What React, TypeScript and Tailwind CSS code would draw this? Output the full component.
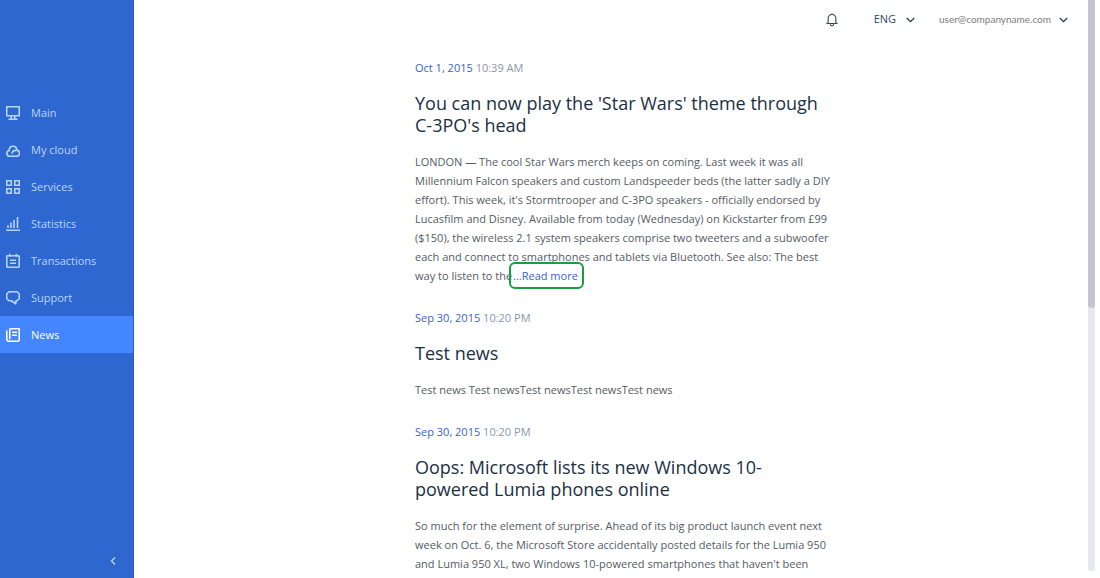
import React from "react";

type IconProps = { children: React.ReactNode };

function NavIcon({ children }: IconProps) {
  return (
    <svg
      width="14"
      height="17"
      viewBox="0 -1 14 17"
      fill="none"
      stroke="currentColor"
      strokeWidth="1.6"
      className="shrink-0"
      aria-hidden="true"
    >
      {children}
    </svg>
  );
}

const items = [
  {
    label: "Main",
    icon: (
      <>
        <path d="M.75 1.75h12.5v9H.75zM2.5 14.25h9" />
        <path d="M5.25 11v3M8.75 11v3" />
      </>
    ),
  },
  {
    label: "My cloud",
    icon: (
      <>
        <path d="M3.7 14.25A2.9 2.9 0 0 1 3.2 8.5C3.2 5.7 4.8 4.2 7 4.2s3.8 1.5 3.9 4.2a2.9 2.9 0 0 1-.6 5.85z" />
        <path d="M6 11.6C6.2 9.4 7.6 8.4 10 8.4" />
      </>
    ),
  },
  {
    label: "Services",
    icon: <path d="M.75 1.75h4.5v4.5H.75zM8.75 1.75h4.5v4.5h-4.5zM.75 9.75h4.5v4.5H.75zM8.75 9.75h4.5v4.5h-4.5z" />,
  },
  {
    label: "Statistics",
    icon: <path d="M0 14.25h14M2 12V9.2M5 12V6.5M8 12V4M11.5 12V1" />,
  },
  {
    label: "Transactions",
    icon: (
      <>
        <rect x=".75" y="2.75" width="12.5" height="11.5" rx="1" />
        <path d="M3.75 .8v3M10.25 .8v3M4 7.25h6M4 10.25h6" />
      </>
    ),
  },
  {
    label: "Support",
    icon: <path d="M3 1.75h8l2.25 2v5l-2.25 2H10l-.3 3.2-4.2-3.2H3l-2.25-2v-5z" strokeLinejoin="round" />,
  },
  {
    label: "News",
    icon: (
      <>
        <path d="M3.75 1.75h9.5v11.2l-1 1.3H2.2L.75 12.8V3.5" />
        <path d="M3.75 1.75v10.5M6 5.25h5M6 8.25h5" />
      </>
    ),
  },
];

function Chevron() {
  return (
    <svg width="9" height="6" viewBox="0 0 9 6" fill="none" stroke="#1f3447" strokeWidth="1.2" aria-hidden="true">
      <path d="M.8 1 4.5 4.7 8.2 1" />
    </svg>
  );
}

type ArticleProps = { date: string; time: string; title: string; children: React.ReactNode };

function Article({ date, time, title, children }: ArticleProps) {
  return (
    <article>
      <p className="text-[11px] leading-4 text-[#8d95a8]">
        <span className="text-[#3863cc]">{date}</span> {time}
      </p>
      <h2 className="mt-4 text-lg leading-[22px] text-[#1b3044]">{title}</h2>
      <p className="mt-4 text-[11px] leading-[19px] whitespace-nowrap text-[#565b5f]">{children}</p>
    </article>
  );
}

export default function App() {
  return (
    <div className="relative flex h-screen overflow-hidden bg-white font-['Open_Sans',sans-serif]">
      <aside className="flex w-[134px] shrink-0 flex-col border-r border-[#2a5cbd] bg-[#2e67cf]">
        <nav className="pt-[94px]">
          {items.map(({ label, icon }) => (
            <a
              key={label}
              href="#"
              aria-current={label === "News" ? "page" : undefined}
              className={
                label === "News"
                  ? "flex h-[37px] items-center gap-[11px] bg-[#4486ff] pl-1.5 text-[11px] leading-[17px] text-white"
                  : "flex h-[37px] items-center gap-[11px] pl-1.5 text-[11px] leading-[17px] text-[#b9d5ff]"
              }
            >
              <NavIcon>{icon}</NavIcon>
              <span>{label}</span>
            </a>
          ))}
        </nav>
        <button aria-label="Collapse menu" className="mt-auto mr-3 mb-[9px] flex size-4 items-center justify-center self-end">
          <svg width="6" height="8" viewBox="0 0 6 8" fill="none" stroke="#c8ddff" strokeWidth="1.2" aria-hidden="true">
            <path d="M5 .5 1.5 4 5 7.5" />
          </svg>
        </button>
      </aside>

      <div className="flex min-w-0 flex-1 flex-col">
        <header className="flex h-[39px] shrink-0 items-center justify-end pr-8">
          <button aria-label="Notifications" className="mr-9">
            <svg width="12" height="14" viewBox="0 0 12 14" fill="none" stroke="#30495c" strokeWidth="1.1" aria-hidden="true">
              <path d="M.3 10.5h11.4M1.8 10.3C2.4 9.5 2.1 8 2.1 5.7 2.1 3 3.8 1.5 6 1.5s3.9 1.5 3.9 4.2c0 2.3-.3 3.8.3 4.6M6 .3v1.2M4.3 11.2c.2 1.2.8 1.7 1.7 1.7s1.5-.5 1.7-1.7" />
            </svg>
          </button>
          <button className="mr-6 flex items-center gap-2.5 text-[11px] text-[#30495c]">
            ENG
            <Chevron />
          </button>
          <button className="flex items-center gap-2 font-['Lato',sans-serif] text-[10px] text-[#7b7b7b]">
            user@companyname.com
            <Chevron />
          </button>
        </header>

        <main className="mx-auto flex w-full max-w-[404px] flex-col gap-[25px] pt-[21px]">
          <Article date="Oct 1, 2015" time="10:39 AM" title="You can now play the 'Star Wars' theme through C-3PO's head">
            LONDON — The cool Star Wars merch keeps on coming. Last week it was all
            <br />
            Millennium Falcon speakers and custom Landspeeder beds (the latter sadly a DIY
            <br />
            effort). This week, it's Stormtrooper and C-3PO speakers - officially endorsed by
            <br />
            Lucasfilm and Disney. Available from today (Wednesday) on Kickstarter from £99
            <br />
            ($150), the wireless 2.1 system speakers comprise two tweeters and a subwoofer
            <br />
            each and connect to smartphones and tablets via Bluetooth. See also: The best
            <br />
            way to listen to the{" "}
            <a
              href="#"
              className="-my-1.5 -ml-1.5 rounded-md border-2 border-[#16a043] py-1 pr-1 pl-0.5 text-[#3863cc]"
            >
              ...Read more
            </a>
          </Article>
          <Article date="Sep 30, 2015" time="10:20 PM" title="Test news">
            Test news Test newsTest newsTest newsTest news
          </Article>
          <Article
            date="Sep 30, 2015"
            time="10:20 PM"
            title="Oops: Microsoft lists its new Windows 10-powered Lumia phones online"
          >
            So much for the element of surprise. Ahead of its big product launch event next
            <br />
            week on Oct. 6, the Microsoft Store accidentally posted details for the Lumia 950
            <br />
            and Lumia 950 XL, two Windows 10-powered smartphones that haven't been
          </Article>
        </main>
      </div>

      <div className="absolute top-0 right-[5px] bottom-[7px] w-[7px] rounded-b bg-[#e6e8f0]">
        <div className="h-[54%] rounded-b bg-[#c3c5d3]" />
      </div>
    </div>
  );
}
